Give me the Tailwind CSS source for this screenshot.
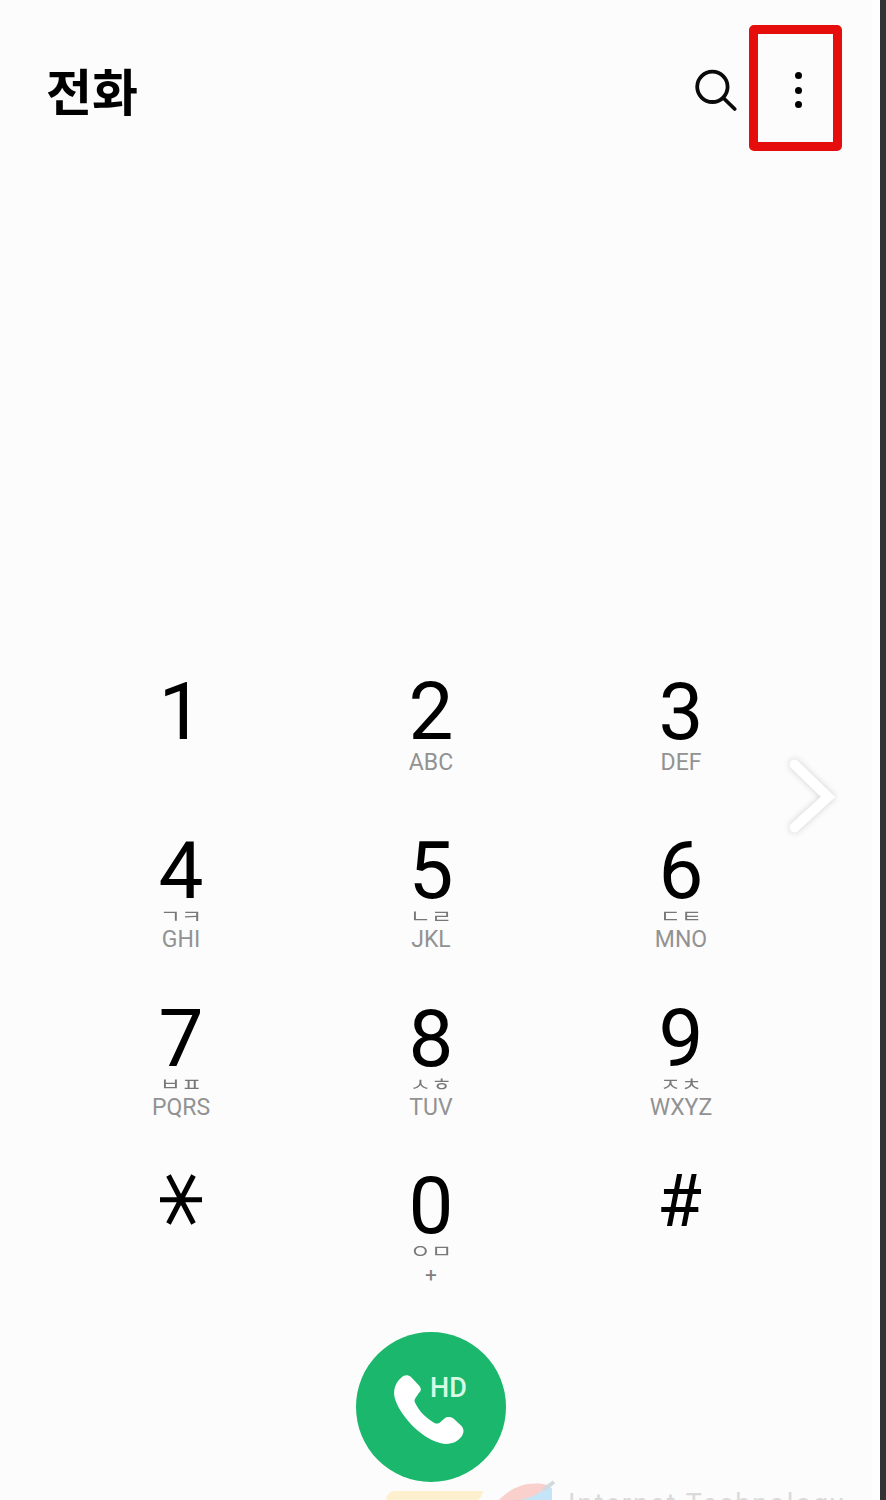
<!DOCTYPE html>
<html lang="ko">
<head>
    <meta charset="UTF-8">
    <meta name="viewport" content="width=device-width, initial-scale=1.0">
    <title>전화</title>
    <script src="https://cdn.jsdelivr.net/npm/@tailwindcss/browser@4"></script>
</head>
<body class="h-[1500px] overflow-hidden bg-[#333] font-['Roboto','Noto_Sans_CJK_KR',sans-serif]">
    <div class="relative w-[880px] h-[1500px] overflow-hidden bg-[#fcfcfc] border-r-8 border-[#fefefe] flex flex-col text-black">

        <!-- Header -->
        <header class="h-[182px] shrink-0 pl-[46px] pr-[30px] pt-[25px] flex items-start justify-between">
            <h1 class="mt-[28px] text-[50px] leading-[72px] font-bold font-['Noto_Sans_CJK_KR',sans-serif]">전화</h1>
            <div class="flex items-start">
                <button class="mt-[43px] mr-[11px]" aria-label="검색">
                    <svg class="block" width="44" height="44" viewBox="0 0 44 44" fill="none" stroke="#0a0a0a" stroke-width="3.8" stroke-linecap="round">
                        <circle cx="18.4" cy="18.8" r="15.2"/>
                        <path d="M29.4 30L40.7 41"/>
                    </svg>
                </button>
                <button class="w-[93px] h-[126px] border-[9px] border-[#e60d0d] rounded-[5px] flex flex-col items-center gap-[7.6px] pt-[38px] pl-[5px]" aria-label="더보기">
                    <span class="size-[7px] rounded-full bg-black"></span>
                    <span class="size-[7px] rounded-full bg-black"></span>
                    <span class="size-[7px] rounded-full bg-black"></span>
                </button>
            </div>
        </header>

        <!-- Keypad -->
        <main class="mt-[491px] ml-[56px] w-[750px] grid grid-cols-3 grid-rows-[160px_168px_167px_164px] text-center">
            <div>
                <div class="text-[80px] leading-[78px]">1</div>
            </div>
            <div>
                <div class="text-[80px] leading-[78px]">2</div>
                <div class="text-[23px] leading-6 text-[#929292]">ABC</div>
            </div>
            <div>
                <div class="text-[80px] leading-[78px]">3</div>
                <div class="text-[23px] leading-6 text-[#929292]">DEF</div>
            </div>

            <div>
                <div class="text-[80px] leading-[77px]">4</div>
                <div class="-mt-[3px] mb-[5px] text-[23px] leading-4 scale-y-80 text-[#777] font-['Noto_Sans_CJK_KR',sans-serif]">ㄱㅋ</div>
                <div class="text-[23px] leading-6 text-[#929292]">GHI</div>
            </div>
            <div>
                <div class="text-[80px] leading-[77px]">5</div>
                <div class="-mt-[3px] mb-[5px] text-[23px] leading-4 scale-y-80 text-[#777] font-['Noto_Sans_CJK_KR',sans-serif]">ㄴㄹ</div>
                <div class="text-[23px] leading-6 text-[#929292]">JKL</div>
            </div>
            <div>
                <div class="text-[80px] leading-[77px]">6</div>
                <div class="-mt-[3px] mb-[5px] text-[23px] leading-4 scale-y-80 text-[#777] font-['Noto_Sans_CJK_KR',sans-serif]">ㄷㅌ</div>
                <div class="text-[23px] leading-6 text-[#929292]">MNO</div>
            </div>

            <div>
                <div class="text-[80px] leading-[77px]">7</div>
                <div class="-mt-[3px] mb-[5px] text-[23px] leading-4 scale-y-80 text-[#777] font-['Noto_Sans_CJK_KR',sans-serif]">ㅂㅍ</div>
                <div class="text-[23px] leading-6 text-[#929292]">PQRS</div>
            </div>
            <div>
                <div class="text-[80px] leading-[77px]">8</div>
                <div class="-mt-[3px] mb-[5px] text-[23px] leading-4 scale-y-80 text-[#777] font-['Noto_Sans_CJK_KR',sans-serif]">ㅅㅎ</div>
                <div class="text-[23px] leading-6 text-[#929292]">TUV</div>
            </div>
            <div>
                <div class="text-[80px] leading-[77px]">9</div>
                <div class="-mt-[3px] mb-[5px] text-[23px] leading-4 scale-y-80 text-[#777] font-['Noto_Sans_CJK_KR',sans-serif]">ㅈㅊ</div>
                <div class="text-[23px] leading-6 text-[#929292]">WXYZ</div>
            </div>

            <div class="flex justify-center pt-[5px]">
                <svg width="44" height="54" viewBox="0 0 44 54" stroke="#000" stroke-width="5" aria-label="별표">
                    <path d="M1 26.8H43M9.5 2.5L34.5 50.5M34.5 2.5L9.5 50.5"/>
                </svg>
            </div>
            <div>
                <div class="text-[80px] leading-[77px]">0</div>
                <div class="-mt-[3px] mb-[5px] text-[23px] leading-4 scale-y-80 text-[#777] font-['Noto_Sans_CJK_KR',sans-serif]">ㅇㅁ</div>
                <div class="text-[21px] leading-[25px] text-[#808080]">+</div>
            </div>
            <div class="pr-[3px]">
                <div class="text-[73px] leading-[66px]">#</div>
            </div>
        </main>

        <!-- Call button -->
        <button class="ml-[356px] size-[150px] shrink-0 rounded-full bg-[#1ab76c] relative" aria-label="통화">
            <svg class="block" width="150" height="150" viewBox="0 0 150 150" fill="#fff">
                <path d="M45.5 45.5C48 43 52 42.4 55 45L63 53.5C66 57 65 59 62.5 61.5L59.5 66C58 68 58.3 69.5 59.5 71.5C63 79 70 86 78 90.7C80.5 92 82.5 92 84.5 90L88.5 86.5C91 84.5 95 84.5 98 87L105 93.5C108.5 97 108 101 105.5 104.5C101.5 110.5 93 113.5 84 111C64 106 42 81 38.5 65C37 57 40 50 45.5 45.5Z"/>
            </svg>
            <span class="absolute left-[74px] top-[41px] text-[27px] leading-[30px] font-medium text-[#d5fbe6]">HD</span>
        </button>

        <!-- Next arrow -->
        <svg class="absolute left-[776px] top-[746px] drop-shadow-[0_0_3px_rgba(0,0,0,0.18)]" width="72" height="100" viewBox="0 0 72 100" fill="none" stroke="#fff" stroke-width="10" stroke-linecap="round">
            <path d="M18.5 18.5L52 51L18.5 81.5"/>
        </svg>

        <!-- Watermark -->
        <div class="absolute left-[380px] top-[1480px] h-[20px] w-[492px] overflow-hidden">
            <svg class="absolute left-0 top-0" width="190" height="20" viewBox="0 0 190 20">
                <path d="M6 20Q7 11 16 11H103Q102 18 97 20Z" fill="#fdf0cf"/>
                <path d="M119 20C130 8 148 0 167 5L174 2L160 16L148 20Z" fill="#f9d0cc"/>
                <path d="M141 20Q158 16 168 6L172 8V20Z" fill="#c4e5f7"/>
                <path d="M163 10L174 2" stroke="#d3d9df" stroke-width="4"/>
            </svg>
            <span class="absolute left-[188px] top-[8px] text-[27px] leading-[32px] tracking-[2.1px] text-[#d9dadb] whitespace-nowrap">Internet Technology</span>
        </div>
    </div>
</body>
</html>
